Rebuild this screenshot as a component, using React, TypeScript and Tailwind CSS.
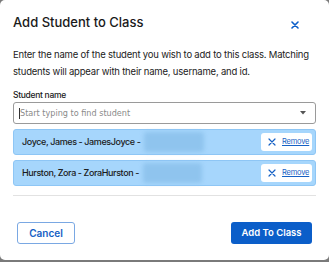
import React from "react";

const font = { fontFamily: "Inter, 'Noto Sans', sans-serif" };
const narrow = { fontFamily: "'Liberation Sans Narrow', 'DejaVu Sans Condensed', 'Roboto Condensed', Inter, sans-serif" };

function Row({ label, blobW }: { label: string; blobW: number }) {
  return (
    <div className="flex h-[26px] items-center justify-between rounded-[3px] border border-[#8ec6f5] bg-[#a6d6fc] pl-[8px] pr-[3px]">
      <div className="flex items-center">
        <span className="text-[9px] font-medium leading-[12px] tracking-[-0.4px] text-[#1b1b1b]">{label}</span>
        <div className="ml-[4px] h-[20px] rounded-[3px] bg-[#8fc4ee] blur-[2px]" style={{ width: blobW }} />
      </div>
      <button className="flex h-[18px] w-[51px] items-center gap-[6px] rounded-[3px] bg-white pl-[7px]">
        <svg width="8" height="8" viewBox="0 0 8 8" className="shrink-0">
          <path d="M1 1 L7 7 M7 1 L1 7" stroke="#1560c4" strokeWidth="1.2" strokeLinecap="round" />
        </svg>
        <span className="text-[7.5px] leading-[10px] tracking-[-0.2px] text-[#1560c4] underline">Remove</span>
      </button>
    </div>
  );
}

export default function App() {
  return (
    <div className="h-[262px] w-[329px] bg-[#7a7a7a]" style={font}>
      <div className="flex h-[260px] w-[329px] flex-col rounded-[5px] bg-white px-[13px]">
        <div className="flex items-center justify-between pt-[12px]">
          <h1 className="text-[13px] font-medium leading-[20px] text-[#1a1a1a]">Add Student to Class</h1>
          <svg width="8" height="8" viewBox="0 0 8 8" className="mr-[17px] mt-[5px]">
            <path d="M1 1 L7 7 M7 1 L1 7" stroke="#0b5ec9" strokeWidth="1.6" strokeLinecap="round" />
          </svg>
        </div>
        <p className="mt-[14px] text-[9.5px] leading-[17px] tracking-[-0.2px] text-[#222]">
          Enter the name of the student you wish to add to this class. Matching students will appear with their name, username, and id.
        </p>
        <label className="mt-[9px] text-[8.5px] font-medium leading-[12px] tracking-[-0.3px] text-[#1a1a1a]">Student name</label>
        <div className="mt-[1px] flex h-[22px] items-center justify-between rounded-[3px] border border-[#9a9a9a] pl-[5px] pr-[9px]">
          <div className="flex items-center">
            <span className="h-[11px] w-px bg-[#333]" />
            <span className="text-[9px] leading-[12px] text-[#8a8a8a]" style={narrow}>Start typing to find student</span>
          </div>
          <svg width="6" height="4" viewBox="0 0 6 4">
            <path d="M0 0 L6 0 L3 3.5 Z" fill="#555" />
          </svg>
        </div>
        <div className="mt-[5px] flex flex-col gap-[5px]">
          <Row label="Joyce, James - JamesJoyce -" blobW={60} />
          <Row label="Hurston, Zora - ZoraHurston -" blobW={59} />
        </div>
        <div className="mt-[9px] h-px bg-[#e2e2e2]" />
        <div className="mt-[26px] flex justify-between px-[4px]">
          <button className="h-[22px] w-[58px] rounded-[3px] border border-[#7aa8e3] text-[10px] font-semibold text-[#1560c4]">
            Cancel
          </button>
          <button className="h-[22px] w-[81px] rounded-[3px] bg-[#0b5ec9] text-[9.5px] font-semibold text-white">
            Add To Class
          </button>
        </div>
      </div>
    </div>
  );
}
